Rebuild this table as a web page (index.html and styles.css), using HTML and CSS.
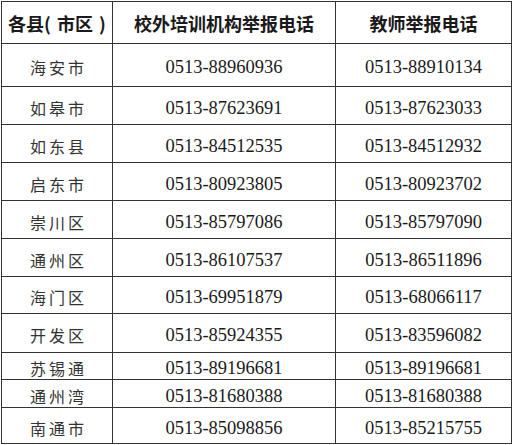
FILE: index.html
```html
<!DOCTYPE html>
<html lang="zh">
<head>
<meta charset="utf-8">
<link rel="stylesheet" href="styles.css">
</head>
<body>
<div class="wrap">
<table class="tbl">
<colgroup><col class="c1"><col class="c2"><col class="c3"></colgroup>
<thead>
<tr class="h"><th class="hd1">各县( 市区 )</th><th>校外培训机构举报电话</th><th>教师举报电话</th></tr>
</thead>
<tbody>
<tr class="r43"><td class="nm">海安市</td><td class="ph">0513-88960936</td><td class="ph">0513-88910134</td></tr>
<tr class="r38"><td class="nm">如皋市</td><td class="ph">0513-87623691</td><td class="ph">0513-87623033</td></tr>
<tr class="r38"><td class="nm">如东县</td><td class="ph">0513-84512535</td><td class="ph">0513-84512932</td></tr>
<tr class="r38"><td class="nm">启东市</td><td class="ph">0513-80923805</td><td class="ph">0513-80923702</td></tr>
<tr class="r38"><td class="nm">崇川区</td><td class="ph">0513-85797086</td><td class="ph">0513-85797090</td></tr>
<tr class="r38"><td class="nm">通州区</td><td class="ph">0513-86107537</td><td class="ph">0513-86511896</td></tr>
<tr class="r37"><td class="nm">海门区</td><td class="ph">0513-69951879</td><td class="ph">0513-68066117</td></tr>
<tr class="r39"><td class="nm">开发区</td><td class="ph">0513-85924355</td><td class="ph">0513-83596082</td></tr>
<tr class="r27"><td class="nm">苏锡通</td><td class="ph">0513-89196681</td><td class="ph">0513-89196681</td></tr>
<tr class="r28"><td class="nm">通州湾</td><td class="ph">0513-81680388</td><td class="ph">0513-81680388</td></tr>
<tr class="r36"><td class="nm">南通市</td><td class="ph">0513-85098856</td><td class="ph">0513-85215755</td></tr>
</tbody>
</table>
</div>
</body>
</html>
```
FILE: styles.css
```css
html, body {
  margin: 0;
  padding: 0;
  background: #ffffff;
}
.wrap {
  padding: 1px 0 0 1px;
}
.tbl {
  border-collapse: collapse;
  table-layout: fixed;
  width: 511px;
}
.c1 { width: 111px; }
.c2 { width: 223px; }
.c3 { width: 176px; }
.tbl th, .tbl td {
  border: 1px solid #333;
  padding: 0;
  text-align: center;
  vertical-align: middle;
  color: #1a1a1a;
  line-height: 18px;
}
.tbl th {
  font-family: "Noto Sans CJK SC", "Noto Sans", sans-serif;
  font-weight: 700;
  font-size: 18px;
  height: 41px;
  white-space: nowrap;
}
.tbl th.hd1 {
  word-spacing: 2px;
}
.tbl td.nm {
  font-family: "Noto Sans CJK SC", sans-serif;
  font-size: 16px;
  letter-spacing: 3px;
  padding-left: 3px;
  padding-top: 4px;
  color: #333;
}
.tbl td.ph {
  font-family: "Liberation Serif", "Times New Roman", serif;
  font-size: 18.5px;
  padding-top: 4px;
}
.r43 td { height: 38px; }
.r38 td { height: 33px; }
.r37 td { height: 32px; }
.r39 td { height: 34px; }
.r27 td { height: 22px; }
.r28 td { height: 23px; }
.r36 td { height: 31px; }
```
